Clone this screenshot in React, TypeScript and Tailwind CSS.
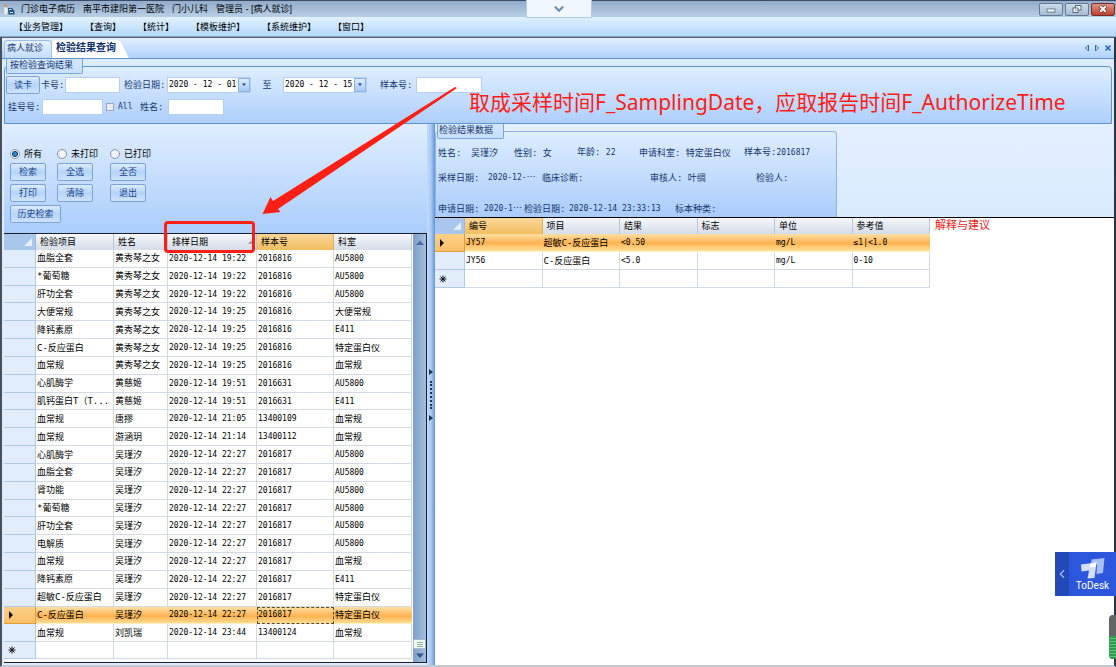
import React from 'react';
import { ChevronDown, ChevronLeft } from 'lucide-react';

const RESULTS: string[][] = [
  ['血脂全套', '黄秀琴之女', '2020-12-14 19:22', '2016816', 'AU5800'],
  ['*葡萄糖', '黄秀琴之女', '2020-12-14 19:22', '2016816', 'AU5800'],
  ['肝功全套', '黄秀琴之女', '2020-12-14 19:22', '2016816', 'AU5800'],
  ['大便常规', '黄秀琴之女', '2020-12-14 19:25', '2016816', '大便常规'],
  ['降钙素原', '黄秀琴之女', '2020-12-14 19:25', '2016816', 'E411'],
  ['C-反应蛋白', '黄秀琴之女', '2020-12-14 19:25', '2016816', '特定蛋白仪'],
  ['血常规', '黄秀琴之女', '2020-12-14 19:25', '2016816', '血常规'],
  ['心肌酶学', '黄慈姬', '2020-12-14 19:51', '2016631', 'AU5800'],
  ['肌钙蛋白T（T...', '黄慈姬', '2020-12-14 19:51', '2016631', 'E411'],
  ['血常规', '唐摎', '2020-12-14 21:05', '13400109', '血常规'],
  ['血常规', '游涵玥', '2020-12-14 21:14', '13400112', '血常规'],
  ['心肌酶学', '吴瑾汐', '2020-12-14 22:27', '2016817', 'AU5800'],
  ['血脂全套', '吴瑾汐', '2020-12-14 22:27', '2016817', 'AU5800'],
  ['肾功能', '吴瑾汐', '2020-12-14 22:27', '2016817', 'AU5800'],
  ['*葡萄糖', '吴瑾汐', '2020-12-14 22:27', '2016817', 'AU5800'],
  ['肝功全套', '吴瑾汐', '2020-12-14 22:27', '2016817', 'AU5800'],
  ['电解质', '吴瑾汐', '2020-12-14 22:27', '2016817', 'AU5800'],
  ['血常规', '吴瑾汐', '2020-12-14 22:27', '2016817', '血常规'],
  ['降钙素原', '吴瑾汐', '2020-12-14 22:27', '2016817', 'E411'],
  ['超敏C-反应蛋白', '吴瑾汐', '2020-12-14 22:27', '2016817', '特定蛋白仪'],
  ['C-反应蛋白', '吴瑾汐', '2020-12-14 22:27', '2016817', '特定蛋白仪'],
  ['血常规', '刘凯瑞', '2020-12-14 23:44', '13400124', '血常规'],
];
const CURRENT = 20;

const DETAILS: string[][] = [
  ['JY57', '超敏C-反应蛋白', '<0.50', '', 'mg/L', '≤1|<1.0'],
  ['JY56', 'C-反应蛋白', '<5.0', '', 'mg/L', '0-10'],
];

const HEAD = 'border-r border-[#b9c4d6] bg-linear-to-b from-[#f6f8fb] to-[#d5dce9] pl-1 text-left font-normal';
const HEAD_ON = 'border-r border-[#e0ad55] bg-linear-to-b from-[#f9d79a] to-[#f2bd5c] pl-1 text-left font-normal';
const CELL = 'overflow-hidden border-r border-b border-[#d3dae5] pl-px';
const CELL_ON = 'border-b border-[#fff0c4] pl-px';
const CELL_FOCUS = 'border-b border-[#fff0c4] pl-px outline-1 -outline-offset-1 outline-dashed outline-[#5a4a2c]';
const ROW_HEAD = 'border-r border-b border-[#b3c8e4] bg-[#e1edfb] text-center';
const ROW_HEAD_ON = 'border-r border-b border-[#e39b38] bg-linear-to-b from-[#fcd08a] to-[#fbc067] text-center';
const ROW_ON = 'bg-linear-to-b from-[#ffe0a3] via-[#fdb24f] to-[#ffe7a0]';
const BTN = 'flex items-center justify-center rounded-xs border border-[#7ba3d6] bg-linear-to-b from-[#dcebfc] via-[#b5d3f8] to-[#cfe3fc] text-[#15428b]';
const FIELD = 'h-4 border border-[#b5cfee] bg-white px-0.5 outline-none';

/* Latin cells use a slightly smaller size so the half-width glyphs line up with the Chinese ones. */
function T({ children }: { children: string }) {
  const latin = /^[\x00-\x7f≤]*$/.test(children);
  return <span className={latin ? 'text-[8px]' : ''}>{children}</span>;
}

/* A value cut short, with the ellipsis at mid height. */
function Cut({ children }: { children: string }) {
  return (
    <span className="text-[8px]">
      {children}<span className="text-[9px] [font-family:'Noto_Sans_CJK_SC',sans-serif]" lang="zh-CN">…</span>
    </span>
  );
}

function Corner() {
  return (
    <th className="border-r border-[#9db9de] bg-[#a9c7ec] p-0" aria-label="全选">
      <svg viewBox="0 0 10 10" className="mr-0.5 ml-auto size-2.5"><path d="M9 1V9H1Z" fill="#e4effc" /></svg>
    </th>
  );
}

function Pointer() {
  return <svg viewBox="0 0 6 8" className="mr-2 ml-1 h-2 w-1.5"><path d="M1 0L5 4L1 8Z" fill="#111" /></svg>;
}

function Star() {
  return (
    <svg viewBox="0 0 8 8" className="ml-1 size-2" stroke="#111" strokeWidth="1">
      <path d="M4 .5V7.500M.5 4H7.500M1.500 1.500L6.500 6.500M6.500 1.500L1.500 6.500" />
    </svg>
  );
}

function DateBox({ id, value }: { id: string; value: string }) {
  return (
    <div className="flex h-4 w-[84px] border border-[#b5cfee] bg-white">
      <input id={id} defaultValue={value} className="w-0 grow px-px text-[8px] text-black outline-none" />
      <button aria-label="选择日期" className="flex w-3 items-center justify-center border border-[#8db2e3] bg-linear-to-b from-[#deebfc] to-[#a6c8f3]">
        <svg viewBox="0 0 6 4" className="h-1 w-1.5"><path d="M1 .5H5L3 3Z" fill="#15428b" /></svg>
      </button>
    </div>
  );
}

function TitleBar() {
  return (
    <header className="flex h-[17px] shrink-0 items-center border-t border-[#3a4a66] bg-linear-to-b from-[#93abcb] to-[#b9cfe6] pl-[3px] text-black">
      <svg viewBox="0 0 12 12" className="mr-1.5 size-3">
        <circle cx="2.5" cy="2.5" r="1.5" fill="#d9953b" />
        <path d="M1 4.5H4L5 8L3.5 11.5H1.5Z" fill="#f0efe4" />
        <path d="M5 5H9L11.5 8V11.5H5.5Z" fill="#1e5187" />
        <path d="M6 6.5H8.5M7 9.5H10" stroke="#d8efff" />
      </svg>
      <h1 className="flex gap-2 whitespace-nowrap [font-family:'Liberation_Sans','Noto_Sans_CJK_SC',sans-serif]">
        <span>门诊电子病历</span>
        <span>南平市建阳第一医院</span>
        <span>门小儿科</span>
        <span>管理员 - [病人就诊]</span>
      </h1>
      <div className="mr-px ml-auto flex gap-0.5">
        <button aria-label="最小化" className="flex h-[13px] w-6 items-center justify-center rounded-xs border border-[#64788f] bg-linear-to-b from-[#cddbea] to-[#a5bbd2]">
          <svg viewBox="0 0 10 10" className="size-2.5"><rect x="1" y="5" width="8" height="3" fill="#fff" stroke="#566577" strokeWidth=".8" /></svg>
        </button>
        <button aria-label="还原" className="flex h-[13px] w-6 items-center justify-center rounded-xs border border-[#64788f] bg-linear-to-b from-[#cddbea] to-[#a5bbd2]">
          <svg viewBox="0 0 10 10" className="size-2.5" fill="#fff" stroke="#566577"><rect x="3.5" y="1.5" width="5.5" height="4.5" /><rect x="1" y="4" width="5" height="4.5" /><path d="M3 6.2H4.5" /></svg>
        </button>
        <button aria-label="关闭" className="flex h-[13px] w-6 items-center justify-center rounded-xs border border-[#6e2f2f] bg-linear-to-b from-[#dd9385] to-[#bf3e2c]">
          <svg viewBox="0 0 10 10" className="size-2.5"><path d="M2 2L8 8M8 2L2 8" stroke="#5b3535" strokeWidth="3.4" /><path d="M2.3 2.3L7.7 7.7M7.7 2.3L2.3 7.7" stroke="#fff" strokeWidth="2" /></svg>
        </button>
      </div>
    </header>
  );
}

function TabStrip() {
  return (
    <div className="flex h-[21px] shrink-0 items-end border-b border-[#5f92cf] bg-linear-to-b from-[#e3efff] to-[#b0d2fc] pr-0.5 pl-0.5">
      <button className="h-[18px] w-12 rounded-t border border-b-0 border-[#9dbfe8] bg-linear-to-b from-[#e6f1fe] to-[#c4dcfa] pb-1 pl-0.5 text-left">
        病人就诊
      </button>
      <button className="h-[18px] w-[77px] bg-white pb-0.5 pl-1 text-left text-[10px] font-bold text-[#0d2f6c] [clip-path:polygon(0_15%,3%_0,85%_0,89%_10%,100%_100%,0_100%)]">
        检验结果查询
      </button>
      <div className="mb-1.5 ml-auto flex items-center gap-1">
        <button aria-label="上一页"><svg viewBox="0 0 6 8" className="h-2 w-1.5"><path d="M4.500 1V7L1.500 4Z" fill="none" stroke="#2b6cb8" /></svg></button>
        <button aria-label="下一页"><svg viewBox="0 0 6 8" className="h-2 w-1.5"><path d="M1.500 1V7L4.500 4Z" fill="none" stroke="#2b6cb8" /></svg></button>
        <button aria-label="关闭页签"><svg viewBox="0 0 8 8" className="size-2"><path d="M1.500 1.500L6.500 6.500M6.500 1.500L1.500 6.500" stroke="#2468b8" strokeWidth="1.6" /></svg></button>
      </div>
    </div>
  );
}

const LEGEND = 'ml-px flex h-[15px] items-center rounded-b-xs border border-t-0 border-[#7ba7dc] bg-linear-to-b from-[#d5e7fd] to-[#c6defb] pb-0.5';

function SearchPanel() {
  return (
    <fieldset className="mx-0.5 shrink-0 rounded-t border border-[#5f92cf] bg-linear-to-b from-[#dfeeff] to-[#aecffc] pb-2 whitespace-nowrap">
      <legend className={`${LEGEND} w-[77px] pl-[3px]`}>按检验查询结果</legend>
      <div className="flex items-center pt-0.5 pl-px">
        <button className={`${BTN} h-[18px] w-[34px]`}>读卡</button>
        <label htmlFor="card" className="w-[25px] pl-px">卡号:</label>
        <input id="card" className={`${FIELD} w-[55px]`} />
        <label htmlFor="from" className="w-[47px] pl-1">检验日期:</label>
        <DateBox id="from" value="2020 - 12 - 01" />
        <label htmlFor="to" className="w-8 text-center">至</label>
        <DateBox id="to" value="2020 - 12 - 15" />
        <label htmlFor="sample" className="w-[49px] pl-[13px]">样本号:</label>
        <input id="sample" className={`${FIELD} w-[66px]`} />
      </div>
      <div className="flex items-center pt-[5px] pl-[3px]">
        <label htmlFor="reg" className="w-[34px] shrink-0">挂号号:</label>
        <input id="reg" className={`${FIELD} w-[61px]`} />
        <input id="all" type="checkbox" className="ml-[3px] size-2 appearance-none border border-[#9aa7b8] bg-[#e9edf2]" />
        <label htmlFor="all" className="w-[26px] pl-1 text-[8px]">All</label>
        <label htmlFor="name" className="w-7">姓名:</label>
        <input id="name" className={`${FIELD} w-14`} />
      </div>
    </fieldset>
  );
}

function Radio({ label, on }: { label: string; on?: boolean }) {
  return (
    <label className="flex items-center gap-1 text-black">
      <input
        type="radio"
        name="printed"
        defaultChecked={on}
        className="size-2.5 appearance-none rounded-full border border-[#8b98a8] bg-[radial-gradient(#ffffff,#dfe5ec)] checked:bg-[radial-gradient(circle,#2a8fd0_0_25%,#0c3f77_45%,#ffffff_60%)]"
      />
      {label}
    </label>
  );
}

function ResultList() {
  return (
    <section className="flex w-[423px] shrink-0 flex-col">
      <div className="flex h-[109px] shrink-0 flex-col gap-[3px] bg-linear-to-b from-[#e0eeff] to-[#aacdfb] pt-6 pl-[6px]">
        <div className="grid grid-cols-[47px_53px_60px] gap-y-[3px]">
          <Radio label="所有" on />
          <Radio label="未打印" />
          <Radio label="已打印" />
          {['检索', '全选', '全否', '打印', '清除', '退出'].map((b) => (
            <button key={b} className={`${BTN} h-[18px] w-9`}>{b}</button>
          ))}
        </div>
        <button className={`${BTN} h-[18px] w-[51px]`}>历史检索</button>
      </div>
      <div className="mb-0.5 flex min-h-0 grow border-y border-r border-[#1a2030] bg-white">
        <table className="h-[calc(100%-3px)] w-[408px] table-fixed border-separate border-spacing-0 whitespace-nowrap text-black">
          <colgroup>
            <col className="w-8" /><col className="w-[78px]" /><col className="w-[54px]" /><col className="w-[89px]" /><col className="w-[77px]" /><col className="w-[78px]" />
          </colgroup>
          <thead>
            <tr className="h-4">
              <Corner />
              <th className={HEAD}>检验项目</th>
              <th className={HEAD}>姓名</th>
              <th className={HEAD}>
                <span className="flex items-center justify-between pr-0.5">
                  排样日期
                  <svg viewBox="0 0 6 4" className="h-1 w-1.5"><path d="M0 4L3 .5L6 4Z" fill="#9a9fa8" /></svg>
                </span>
              </th>
              <th className={HEAD_ON}>样本号</th>
              <th className={HEAD}>科室</th>
            </tr>
          </thead>
          <tbody>
            {RESULTS.map((r, i) => (
              <tr key={i} className={i === CURRENT ? ROW_ON : ''}>
                <td className={i === CURRENT ? ROW_HEAD_ON : ROW_HEAD}>{i === CURRENT && <Pointer />}</td>
                {r.map((c, j) => (
                  <td key={j} className={i !== CURRENT ? CELL : j === 3 ? CELL_FOCUS : CELL_ON}><T>{c}</T></td>
                ))}
              </tr>
            ))}
            <tr>
              <td className={ROW_HEAD}><Star /></td>
              {[0, 1, 2, 3, 4].map((j) => <td key={j} className={CELL}>{'\u00a0'}</td>)}
            </tr>
          </tbody>
        </table>
        <div className="ml-auto flex w-[13px] flex-col items-center bg-linear-to-r from-[#7f9fc9] to-[#a3bfe0]">
          <svg viewBox="0 0 8 5" className="mt-1.5 h-[5px] w-2"><path d="M0 5L4 .5L8 5Z" fill="#4a6c9c" /></svg>
          <span className="mt-auto flex h-2.5 w-full flex-col items-center justify-center gap-px border border-[#a9b9cc] bg-[#f0f5f2]">
            <i className="h-px w-1.5 bg-[#8ab598]" /><i className="h-px w-1.5 bg-[#8ab598]" /><i className="h-px w-1.5 bg-[#8ab598]" />
          </span>
          <svg viewBox="0 0 8 5" className="my-1 h-[5px] w-2"><path d="M0 .5H8L4 5Z" fill="#35568a" /></svg>
        </div>
      </div>
    </section>
  );
}

function Splitter() {
  return (
    <div className="flex w-2 shrink-0 flex-col items-center justify-center gap-1.5 bg-linear-to-r from-[#c4dcfa] via-[#a9c9f2] to-[#5f96dc]">
      <svg viewBox="0 0 4 6" className="h-1.5 w-1"><path d="M0 0L4 3L0 6Z" fill="#1d3557" /></svg>
      <span className="h-7 border-l-2 border-dotted border-[#1d3557]" />
      <svg viewBox="0 0 4 6" className="h-1.5 w-1"><path d="M0 0L4 3L0 6Z" fill="#1d3557" /></svg>
    </div>
  );
}

function DetailPane() {
  return (
    <section className="flex min-w-0 grow flex-col bg-white">
      <div className="h-[94px] shrink-0 border-b border-black bg-linear-to-b from-[#e4f0ff] to-[#d9eafd]">
        <fieldset className="h-full w-[402px] rounded-t border border-b-0 border-[#8fb4e2] bg-linear-to-b from-[#deedff] to-[#aaccfb] whitespace-nowrap">
          <legend className={`${LEGEND} w-[67px] pl-px`}>检验结果数据</legend>
          <div className="grid h-[27px] grid-cols-[33px_43px_63px_62px_105px_90px] items-center pl-0.5">
            <span>姓名:</span>
            <span>吴瑾汐</span>
            <span>性别: 女</span>
            <span>年龄: <T>22</T></span>
            <span>申请科室: 特定蛋白仪</span>
            <span>样本号:<T>2016817</T></span>
          </div>
          <div className="grid h-[23px] grid-cols-[50px_54px_108px_106px_60px] items-center pl-0.5">
            <span>采样日期:</span>
            <Cut>2020-12-</Cut>
            <span>临床诊断:</span>
            <span>审核人: 叶绸</span>
            <span>检验人:</span>
          </div>
          <div className="grid h-[27px] grid-cols-[46px_40px_45px_106px_60px] items-end pb-px pl-0.5">
            <span>申请日期:</span>
            <Cut>2020-1</Cut>
            <span>检验日期:</span>
            <T>2020-12-14 23:33:13</T>
            <span>标本种类:</span>
          </div>
        </fieldset>
      </div>
      <div className="flex items-start">
        <table className="w-[495px] table-fixed border-separate border-spacing-0 whitespace-nowrap text-black">
          <colgroup>
            <col className="w-[30px]" /><col /><col /><col /><col /><col /><col />
          </colgroup>
          <thead>
            <tr className="h-4">
              <Corner />
              {['编号', '项目', '结果', '标志', '单位', '参考值'].map((h, i) => (
                <th key={h} className={i === 0 ? HEAD_ON : HEAD}>{h}</th>
              ))}
            </tr>
          </thead>
          <tbody>
            {DETAILS.map((r, i) => (
              <tr key={i} className={i === 0 ? `h-[18px] ${ROW_ON}` : 'h-[18px]'}>
                <td className={i === 0 ? ROW_HEAD_ON : ROW_HEAD}>{i === 0 && <Pointer />}</td>
                {r.map((c, j) => <td key={j} className={i === 0 ? CELL_ON : CELL}><T>{c}</T></td>)}
              </tr>
            ))}
            <tr className="h-[18px]">
              <td className={ROW_HEAD}><Star /></td>
              {[0, 1, 2, 3, 4, 5].map((j) => <td key={j} className={CELL} />)}
            </tr>
          </tbody>
        </table>
        <h2 className="pt-0.5 pl-[5px] text-[11px] text-[#f01818]">解释与建议</h2>
      </div>
    </section>
  );
}

function Overlays() {
  return (
    <>
      <button aria-label="展开" className="absolute top-0 left-[526px] flex h-[18px] w-[66px] items-center justify-center border border-t-0 border-[#b5c9e2] bg-[#f1f7ff]">
        <ChevronDown size={14} strokeWidth={4} color="#6c92ad" />
      </button>
      <div className="absolute top-[221px] left-[164px] h-8 w-[91px] rounded-sm border-3 border-[#ff2015]" />
      <svg viewBox="0 0 200 132" className="absolute top-[85px] left-[260px] h-[132px] w-[200px]">
        <path d="M2.500 129L10.500 112L13 116L195 2L197 3L18 124L20.500 127Z" fill="#ff2015" />
      </svg>
      <p className="absolute top-[90px] left-[469px] text-[21px] leading-6 whitespace-nowrap text-[#ff2015] [font-family:'Noto_Sans','Noto_Sans_CJK_SC',sans-serif]">
        取成采样时间F_SamplingDate，应取报告时间F_AuthorizeTime
      </p>
      <button className="absolute top-[552px] right-0 flex h-11 w-[61px] bg-[#2c57dc] text-white">
        <span className="flex h-full w-3.5 items-center justify-center bg-[#2449b8]">
          <ChevronLeft size={16} color="#a9bdf5" />
        </span>
        <span className="flex grow flex-col items-center pt-1.5">
          <svg viewBox="0 0 24 21" className="h-[21px] w-6">
            <path d="M10.500 1.500L23.500 0L22 15L15.500 16L16 6L10 7Z" fill="#a9bef7" />
            <path d="M0 6.500L15.500 4.500L13.500 20L6.500 20.500L8 12.500L.5 13.500Z" fill="#d3defd" />
            <path d="M9.500 5.300L15.500 4.500L14.800 8.800L9 9.500Z" fill="#fff" />
          </svg>
          <span className="pt-px text-[10px] leading-3 [font-family:Roboto,sans-serif]">ToDesk</span>
        </span>
      </button>
      <div className="absolute top-[615px] right-0 flex h-11 w-[7px] flex-col justify-end overflow-hidden rounded-l bg-[#626664]">
        <div className="h-[23px] bg-[repeating-linear-gradient(#2f9a50_0_2px,#5cc47c_2px_3px)]" />
      </div>
    </>
  );
}

export default function App() {
  return (
    <div className="relative flex h-screen flex-col overflow-hidden bg-[#dcebfd] text-[9px] leading-3 text-[#15366e] [font-family:'DejaVu_Sans_Mono','Noto_Sans_CJK_SC',monospace]">
      <TitleBar />
      <nav className="flex h-5 shrink-0 items-center gap-[17px] border-b border-[#8ea6c4] bg-linear-to-b from-[#e2f1fe] to-[#b5d8fc] pl-3.5 text-black">
        {['【业务管理】', '【查询】', '【统计】', '【模板维护】', '【系统维护】', '【窗口】'].map((m) => (
          <button key={m}>{m}</button>
        ))}
      </nav>
      <main className="flex min-h-0 grow flex-col border-x-2 border-t border-b-2 border-t-[#56606e] border-r-[#2c3442] border-b-[#c3c8d2] border-l-[#4b4f58]">
        <TabStrip />
        <SearchPanel />
        <div className="flex min-h-0 grow pl-0.5">
          <ResultList />
          <Splitter />
          <DetailPane />
        </div>
      </main>
      <Overlays />
    </div>
  );
}
